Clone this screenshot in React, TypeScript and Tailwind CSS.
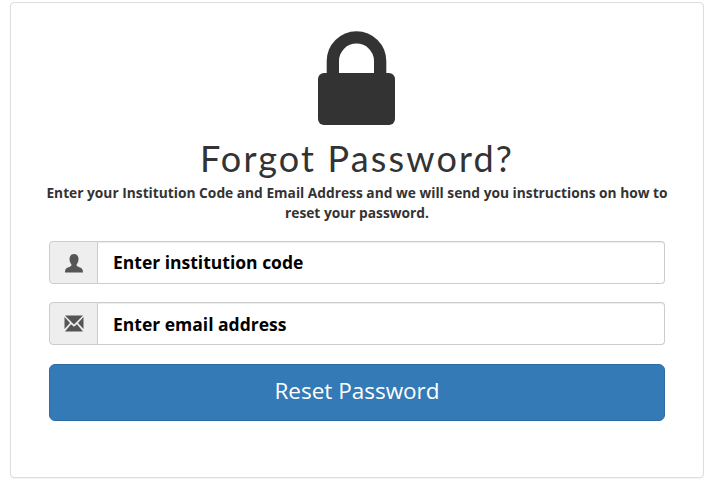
import React from 'react'
import clsx from 'clsx'

const LockIcon = () => (
  <svg width="77" height="94" viewBox="0 0 77 94" className="mr-[1px] block" fill="#333333">
    <path d="M8.7 44 V30 A29.8 29.8 0 0 1 68.3 30 V44 H56 V30 A17.5 17.5 0 0 0 21 30 V44 Z" />
    <rect x="0" y="42" width="77" height="52" rx="6" />
  </svg>
)

const UserIcon = () => (
  <svg width="20" height="20" viewBox="0 0 20 20" fill="#555555" className="block">
    <path d="M10 1 C13 1 14.5 3 14.5 6 C14.5 8.5 13.5 10.5 12.5 11.5 C12.5 13 13.5 13.5 15.5 14.2 C17.5 15 19 15.8 19 19.5 H1 C1 15.8 2.5 15 4.5 14.2 C6.5 13.5 7.5 13 7.5 11.5 C6.5 10.5 5.5 8.5 5.5 6 C5.5 3 7 1 10 1 Z" />
  </svg>
)

const MailIcon = () => (
  <svg width="20" height="17" viewBox="0 0 20 17" fill="#555555" className="block">
    <path d="M1 0.5 H19 L10 9.5 Z" />
    <path d="M0.5 2 L6 8 L0.5 14 Z" />
    <path d="M19.5 2 L14 8 L19.5 14 Z" />
    <path d="M1 16.5 L7 9.3 L10 11.8 L13 9.3 L19 16.5 Z" />
  </svg>
)

const Field = ({ icon, placeholder, type, className }: { icon: React.ReactNode; placeholder: string; type: string; className?: string }) => (
  <div className="flex h-[43px]">
    <span className="flex w-[49px] items-center justify-center rounded-l border border-[#cccccc] bg-[#eeeeee]">
      {icon}
    </span>
    <input
      type={type}
      placeholder={placeholder}
      className={clsx(
        'min-w-0 flex-1 rounded-r border border-l-0 border-[#cccccc] bg-white px-[15px] text-[17.5px] font-bold text-black shadow-[inset_0_1px_1px_rgba(0,0,0,0.075)] outline-none placeholder:text-black',
        className,
      )}
    />
  </div>
)

export default function App() {
  return (
    <div className="h-[485px] w-[713px] bg-white pt-[2px] pr-[9px] pl-[10px] font-['Open_Sans',sans-serif] text-[#333333]">
      <div className="flex h-[476px] flex-col items-center rounded border border-[#dddddd] bg-white px-[38px] pt-[28px] shadow-[0_1px_1px_rgba(0,0,0,0.05)]">
        <LockIcon />
        <h1 className="mt-[8px] font-['Lato',sans-serif] text-[36px] leading-[50px] font-normal tracking-[2.15px]">
          Forgot Password?
        </h1>
        <p className="-mx-[6px] text-center text-[13.75px] leading-[20px] font-bold">
          Enter your Institution Code and Email Address and we will send you instructions on how to reset your password.
        </p>
        <form className="mt-[18px] flex w-full flex-col">
          <Field icon={<UserIcon />} placeholder="Enter institution code" type="text" />
          <div className="mt-[18px]">
            <Field icon={<MailIcon />} placeholder="Enter email address" type="email" className="pt-[2px]" />
          </div>
          <button
            type="button"
            className="mt-[19px] h-[57px] w-full rounded-md border border-[#2e6da4] bg-[#337ab7] pb-[3px] text-[22.5px] text-white"
          >
            Reset Password
          </button>
        </form>
      </div>
    </div>
  )
}
